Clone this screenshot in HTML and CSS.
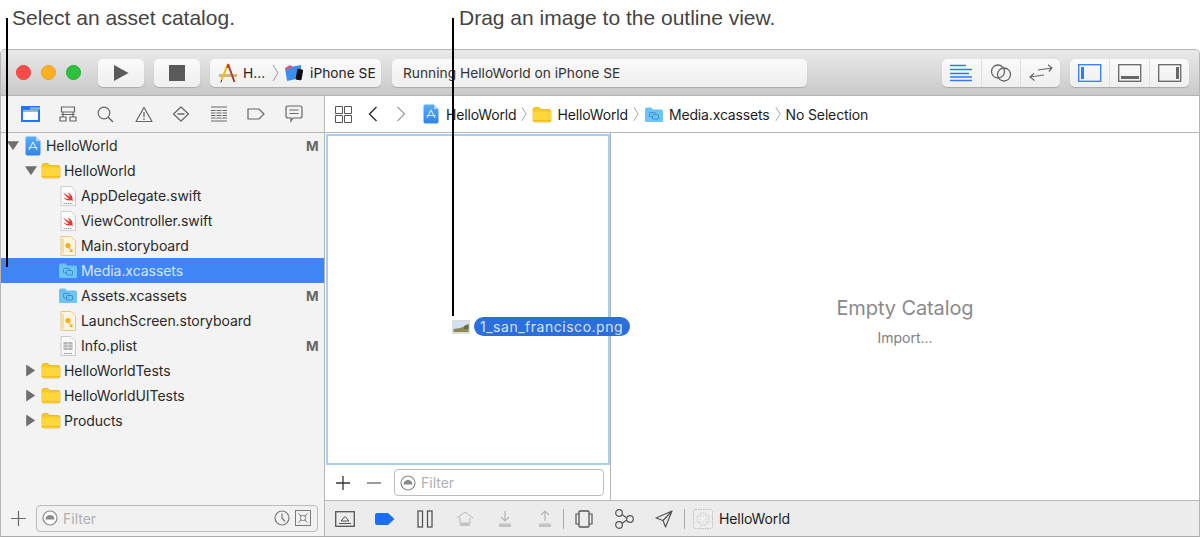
FILE: index.html
```html
<!DOCTYPE html>
<html lang="en">
<head>
<meta charset="utf-8">
<title>Xcode asset catalog</title>
<link rel="stylesheet" href="styles.css">
</head>
<body>
<svg class="defs" width="0" height="0" aria-hidden="true">
  <defs>
    <linearGradient id="projgrad" x1="0" y1="0" x2="0" y2="1"><stop offset="0" stop-color="#57aef7"/><stop offset="1" stop-color="#2f84ea"/></linearGradient>
    <symbol id="folder" viewBox="0 0 20 17"><path d="M1 3.500Q1 1.500 3 1.500H7L9 3.500H17Q19 3.500 19 5.500V14.500Q19 16 17.500 16H2.500Q1 16 1 14.500Z" fill="#f9c926" stroke="#e0a91b" stroke-width=".7"/><path d="M1 5.500H19V14.500Q19 16 17.500 16H2.500Q1 16 1 14.500Z" fill="#fed73d"/><path d="M1 14.800H19" stroke="#eeb11c" stroke-width="1"/></symbol>
    <symbol id="bluefolder" viewBox="0 0 20 17"><path d="M1 3.500Q1 1.500 3 1.500H7L9 3.500H17Q19 3.500 19 5.500V14.500Q19 16 17.500 16H2.500Q1 16 1 14.500Z" fill="#6cc0f2"/><path d="M1 5.500H19V14.500Q19 16 17.500 16H2.500Q1 16 1 14.500Z" fill="#6dc4f7"/><rect x="5.500" y="6.500" width="6" height="4.500" rx=".8" fill="none" stroke="#3d8fcb"/><rect x="8.500" y="8.500" width="6" height="4.500" rx=".8" fill="#6dc4f7" stroke="#3d8fcb"/></symbol>
    <symbol id="project" viewBox="0 0 16 20"><path d="M2 .5H11L15.500 5V17.500Q15.500 19.500 13.500 19.500H2.500Q.5 19.500 .5 17.500V2Q.5.5 2 .5Z" fill="url(#projgrad)"/><path d="M11 .5L15.500 5H11Z" fill="#b6d9f9"/><path d="M8 6L4 14M8 6L12 14M3.500 11.500H12.500" stroke="#d5e9fc" stroke-width="1.100" fill="none"/></symbol>
    <symbol id="swift" viewBox="0 0 16 20"><path d="M1 .5H11L15.500 5V19.500H1Z" fill="#fbfbfb" stroke="#cfcfcf"/><path d="M3 6.500C6 9 8 10 10 11L5 7.500L10 10.500C9 8.500 8 7 8 6.500C10.500 8 13 10.500 12.500 13.500C13 14.500 13 15 12.800 15C12 14 11 14 10 14.500C7.500 15 5 13.500 3.500 11.500C6 13 8 13 9 12.500C7 11.500 4.500 9 3 6.500Z" fill="#e8352c"/><path d="M3.500 17.500H12.500" stroke="#999" stroke-width="1.100" stroke-dasharray="1.500 .7"/></symbol>
    <symbol id="story" viewBox="0 0 16 20"><path d="M1 .5H11L15.500 5V19.500H1Z" fill="#fdf6df" stroke="#e0c888"/><path d="M3 3V18" stroke="#f2d58f" stroke-width="1.500"/><circle cx="8" cy="9.500" r="2.600" fill="#f1b21e"/><path d="M9 12L12 15.500M12 13V15.500H9.500" stroke="#e2a41a" fill="none"/></symbol>
    <symbol id="plist" viewBox="0 0 16 20"><path d="M1 .5H11L15.500 5V19.500H1Z" fill="#f8f8f8" stroke="#c9c9c9"/><path d="M3.500 6H12.500V14H3.500Z" fill="#b4b4b4"/><path d="M8 6V14M3.500 8.700H12.500M3.500 11.300H12.500" stroke="#eee" stroke-width=".7"/><path d="M4 17.500H12" stroke="#999" stroke-width="1.100" stroke-dasharray="1.500 .7"/></symbol>
    <symbol id="filtericon" viewBox="0 0 16 16"><circle cx="8" cy="8" r="7" fill="#fff" stroke="#8a8a8a" stroke-width="1.200"/><path d="M3.500 9.500A4.500 4.500 0 0 1 12.500 9.500Z" fill="#8a8a8a"/></symbol>
  </defs>
</svg>

<div class="page">
  <header class="captions">
    <p class="caption caption-left">Select an asset catalog.</p>
    <p class="caption caption-right">Drag an image to the outline view.</p>
  </header>

  <main class="window">
    <section class="toolbar">
      <div class="lights"><i class="light red"></i><i class="light amber"></i><i class="light green"></i></div>
      <button class="tbtn"><svg width="16" height="18" viewBox="0 0 16 18"><path d="M1 1L15.500 9L1 17Z" fill="#5a5a5a"/></svg></button>
      <button class="tbtn"><svg width="16" height="16" viewBox="0 0 16 16"><rect width="16" height="16" fill="#5a5a5a"/></svg></button>
      <div class="scheme">
        <svg width="20" height="20" viewBox="0 0 20 20"><path d="M1 11H19V14H1Z" fill="#d8b380"/><path d="M10 1L3.500 17" stroke="#e9c21f" stroke-width="2"/><path d="M10 1L16.500 19" stroke="#a5452f" stroke-width="2"/><path d="M9 2H11.500V5H8.500Z" fill="#c0392b"/><path d="M3.500 17L3 19.500" stroke="#333"/></svg>
        <span class="scheme-name">H...</span>
        <svg class="crumb-arrow" width="7" height="18" viewBox="0 0 7 18"><path d="M1 1L6 9L1 17" fill="none" stroke="#9a9a9a"/></svg>
        <svg width="20" height="18" viewBox="0 0 20 18"><path d="M1 4L17 1V14L3 17Z" fill="#3a8fee"/><path d="M1 4L6 1L9 3L3 6Z" fill="#e0518a"/><rect x="12.500" y="5" width="6" height="11" rx="1.200" fill="#111" transform="rotate(10 15 10)"/></svg>
        <span class="scheme-device">iPhone SE</span>
      </div>
      <div class="status">Running HelloWorld on iPhone SE</div>
      <div class="segments seg-editor">
        <button class="seg"><svg width="24" height="18" viewBox="0 0 24 18"><path d="M1 1.500H17M1 5.500H23M1 9.500H20M1 13H23M1 16.500H23" stroke="#2f7bf5" stroke-width="1.300"/></svg></button>
        <button class="seg"><svg width="22" height="18" viewBox="0 0 22 18"><circle cx="8" cy="7.500" r="6.500" fill="none" stroke="#666" stroke-width="1.300"/><circle cx="14" cy="10.500" r="6.500" fill="none" stroke="#666" stroke-width="1.300"/></svg></button>
        <button class="seg"><svg width="24" height="18" viewBox="0 0 24 18"><path d="M9 6L23 4M19 .8L23 4L19.800 7.500M15 11L1 13M5 9.500L1 13L5.500 16.500" fill="none" stroke="#666" stroke-width="1.200"/></svg></button>
      </div>
      <div class="segments seg-views">
        <button class="seg"><svg width="24" height="18" viewBox="0 0 24 18"><rect x=".7" y=".7" width="22" height="16.600" fill="none" stroke="#2f7bf5" stroke-width="1.300"/><rect x="3" y="3" width="3" height="12" fill="#2f7bf5"/></svg></button>
        <button class="seg"><svg width="24" height="18" viewBox="0 0 24 18"><rect x=".7" y=".7" width="22" height="16.600" fill="none" stroke="#666" stroke-width="1.300"/><rect x="3" y="12" width="18" height="3" fill="#666"/></svg></button>
        <button class="seg"><svg width="24" height="18" viewBox="0 0 24 18"><rect x=".7" y=".7" width="22" height="16.600" fill="none" stroke="#666" stroke-width="1.300"/><rect x="18" y="3" width="3" height="12" fill="#666"/></svg></button>
      </div>
    </section>

    <section class="workspace">
      <aside class="sidebar">
        <nav class="tabs">
          <span class="tab"><svg width="19" height="16" viewBox="0 0 19 16"><path d="M1 1H18V15H1Z" fill="#fff" stroke="#1f77f7" stroke-width="2"/><path d="M0 0H19V4H0Z" fill="#1f77f7"/><path d="M9 1.500H19V3.500H9Z" fill="#8fbcfb"/><path d="M1.500 5H17.500" stroke="#1f77f7" stroke-width="1"/></svg></span>
          <span class="tab"><svg width="18" height="16" viewBox="0 0 18 16"><path d="M2.500 1H15.500V6H2.500ZM1 11H7V15H1ZM11 11H17V15H11ZM4 6V11M14 6V11M2.500 8.500H15.500" fill="none" stroke="#666" stroke-width="1.200"/></svg></span>
          <span class="tab"><svg width="17" height="17" viewBox="0 0 17 17"><circle cx="7" cy="7" r="5.800" fill="none" stroke="#666" stroke-width="1.200"/><path d="M11 11L16 16" stroke="#666" stroke-width="1.500"/></svg></span>
          <span class="tab"><svg width="18" height="17" viewBox="0 0 18 17"><path d="M9 1.500L17 15.500H1Z" fill="none" stroke="#666" stroke-width="1.200" stroke-linejoin="round"/><path d="M9 6V11M9 12.300V14" stroke="#666" stroke-width="1.300"/></svg></span>
          <span class="tab"><svg width="18" height="16" viewBox="0 0 18 16"><path d="M9 1L16.500 8L9 15L1.500 8Z" fill="none" stroke="#666" stroke-width="1.200" stroke-linejoin="round"/><path d="M5.500 8H12.500" stroke="#666" stroke-width="1.300"/></svg></span>
          <span class="tab"><svg width="18" height="16" viewBox="0 0 18 16"><path d="M1 1H17M1 4.500H17M1 7H17M1 9.500H17M1 12H17M1 15H17" stroke="#666"/><path d="M6 4V12.500M12 4V12.500" stroke="#f3f3f3"/></svg></span>
          <span class="tab"><svg width="18" height="12" viewBox="0 0 18 12"><path d="M1 1H12L17 6L12 11H1Z" fill="none" stroke="#666" stroke-width="1.200"/></svg></span>
          <span class="tab"><svg width="18" height="18" viewBox="0 0 18 18"><path d="M3 1H15Q17 1 17 3V11Q17 13 15 13H8L6 16V13H3Q1 13 1 11V3Q1 1 3 1Z" fill="none" stroke="#666" stroke-width="1.200"/><path d="M4.500 5H13.500M4.500 8.500H13.500" stroke="#666"/></svg></span>
        </nav>
        <ul class="tree">
          <li class="row l0"><i class="tri open"></i><span class="slot"><svg width="16" height="20"><use href="#project"/></svg></span><span class="name">HelloWorld</span><b class="flag">M</b></li>
          <li class="row l1"><i class="tri open"></i><span class="slot"><svg width="20" height="17"><use href="#folder"/></svg></span><span class="name">HelloWorld</span></li>
          <li class="row l2"><i class="tri none"></i><span class="slot"><svg width="16" height="20"><use href="#swift"/></svg></span><span class="name">AppDelegate.swift</span></li>
          <li class="row l2"><i class="tri none"></i><span class="slot"><svg width="16" height="20"><use href="#swift"/></svg></span><span class="name">ViewController.swift</span></li>
          <li class="row l2"><i class="tri none"></i><span class="slot"><svg width="16" height="20"><use href="#story"/></svg></span><span class="name">Main.storyboard</span></li>
          <li class="row l2 selected"><i class="tri none"></i><span class="slot"><svg width="20" height="17"><use href="#bluefolder"/></svg></span><span class="name">Media.xcassets</span></li>
          <li class="row l2"><i class="tri none"></i><span class="slot"><svg width="20" height="17"><use href="#bluefolder"/></svg></span><span class="name">Assets.xcassets</span><b class="flag">M</b></li>
          <li class="row l2"><i class="tri none"></i><span class="slot"><svg width="16" height="20"><use href="#story"/></svg></span><span class="name">LaunchScreen.storyboard</span></li>
          <li class="row l2"><i class="tri none"></i><span class="slot"><svg width="16" height="20"><use href="#plist"/></svg></span><span class="name">Info.plist</span><b class="flag">M</b></li>
          <li class="row l1"><i class="tri closed"></i><span class="slot"><svg width="20" height="17"><use href="#folder"/></svg></span><span class="name">HelloWorldTests</span></li>
          <li class="row l1"><i class="tri closed"></i><span class="slot"><svg width="20" height="17"><use href="#folder"/></svg></span><span class="name">HelloWorldUITests</span></li>
          <li class="row l1"><i class="tri closed"></i><span class="slot"><svg width="20" height="17"><use href="#folder"/></svg></span><span class="name">Products</span></li>
        </ul>
        <div class="side-foot">
          <svg width="15" height="15" viewBox="0 0 15 15"><path d="M7.500 0V15M0 7.500H15" stroke="#6a6a6a" stroke-width="1.200"/></svg>
          <div class="filter side-filter">
            <svg width="16" height="16"><use href="#filtericon"/></svg>
            <span class="filter-text">Filter</span>
            <svg class="clock" width="16" height="16" viewBox="0 0 16 16"><circle cx="8" cy="8" r="7" fill="none" stroke="#7a7a7a" stroke-width="1.200"/><path d="M8 3.500V8L11 11.500" fill="none" stroke="#7a7a7a" stroke-width="1.200"/></svg>
            <svg width="16" height="16" viewBox="0 0 16 16"><rect x=".5" y=".5" width="15" height="15" fill="none" stroke="#7a7a7a"/><path d="M3.500 3.500L6 6M12.500 3.500L10 6M3.500 12.500L6 10M12.500 12.500L10 10" stroke="#7a7a7a"/><rect x="5.500" y="5.500" width="5" height="5" rx="2" fill="none" stroke="#7a7a7a"/></svg>
          </div>
        </div>
      </aside>

      <div class="main">
        <nav class="jumpbar">
          <svg class="j-grid" width="17" height="17" viewBox="0 0 17 17"><path d="M.5.5H7.500V7.500H.5ZM9.500.5H16.500V7.500H9.500ZM.5 9.500H7.500V16.500H.5ZM9.500 9.500H16.500V16.500H9.500Z" fill="none" stroke="#555"/></svg>
          <svg class="j-back" width="10" height="16" viewBox="0 0 10 16"><path d="M8.500 1L1.500 8L8.500 15" fill="none" stroke="#333" stroke-width="1.500"/></svg>
          <svg class="j-fwd" width="10" height="16" viewBox="0 0 10 16"><path d="M1.500 1L8.500 8L1.500 15" fill="none" stroke="#aaa" stroke-width="1.500"/></svg>
          <svg class="j-icon" width="16" height="20"><use href="#project"/></svg>
          <span class="crumb crumb-first">HelloWorld</span>
          <svg class="crumb-arrow" width="6" height="18" viewBox="0 0 7 18"><path d="M1 1L6 9L1 17" fill="none" stroke="#999"/></svg>
          <svg width="20" height="17"><use href="#folder"/></svg>
          <span class="crumb">HelloWorld</span>
          <svg class="crumb-arrow" width="6" height="18" viewBox="0 0 7 18"><path d="M1 1L6 9L1 17" fill="none" stroke="#999"/></svg>
          <svg width="20" height="17"><use href="#bluefolder"/></svg>
          <span class="crumb">Media.xcassets</span>
          <svg class="crumb-arrow" width="6" height="18" viewBox="0 0 7 18"><path d="M1 1L6 9L1 17" fill="none" stroke="#999"/></svg>
          <span class="crumb">No Selection</span>
        </nav>
        <div class="content">
          <div class="outline-col">
            <div class="outline"></div>
            <div class="outline-foot">
              <svg width="16" height="16" viewBox="0 0 16 16"><path d="M8 1V15M1 8H15" stroke="#333" stroke-width="1.300"/></svg>
              <svg width="16" height="16" viewBox="0 0 16 16"><path d="M1 8H15" stroke="#666" stroke-width="1.300"/></svg>
              <div class="filter outline-filter">
                <svg width="16" height="16"><use href="#filtericon"/></svg>
                <span class="filter-text">Filter</span>
              </div>
            </div>
          </div>
          <div class="detail">
            <p class="empty-title">Empty Catalog</p>
            <p class="empty-action">Import...</p>
          </div>
        </div>
        <div class="debugbar">
          <span class="dbg"><svg width="20" height="16" viewBox="0 0 20 16"><rect x=".7" y=".7" width="18.600" height="14.600" fill="none" stroke="#555" stroke-width="1.300"/><path d="M6 10L10 5.500L14 10ZM4 12.500H16" fill="none" stroke="#555"/></svg></span>
          <span class="dbg"><svg width="20" height="12" viewBox="0 0 20 12"><path d="M2 0H13L19.500 6L13 12H2Q0 12 0 10V2Q0 0 2 0Z" fill="#1a6ff5"/></svg></span>
          <span class="dbg"><svg width="16" height="18" viewBox="0 0 16 18"><rect x="1" y="1" width="4.500" height="16" fill="none" stroke="#555" stroke-width="1.300"/><rect x="10.500" y="1" width="4.500" height="16" fill="none" stroke="#555" stroke-width="1.300"/></svg></span>
          <span class="dbg"><svg width="18" height="17" viewBox="0 0 18 17"><path d="M1 8L9 2L17 8M4 13V7M14 8V13" fill="none" stroke="#b5b5b5"/><rect x="4" y="12.500" width="10" height="3.500" fill="#c3c3c3"/></svg></span>
          <span class="dbg"><svg width="14" height="18" viewBox="0 0 14 18"><path d="M7 1V10M3 7L7 11L11 7" fill="none" stroke="#b5b5b5" stroke-width="1.200"/><rect x="1" y="13.500" width="12" height="3.500" fill="#c3c3c3"/></svg></span>
          <span class="dbg"><svg width="14" height="18" viewBox="0 0 14 18"><path d="M7 11V2M3 5L7 1L11 5" fill="none" stroke="#b5b5b5" stroke-width="1.200"/><rect x="1" y="13.500" width="12" height="3.500" fill="#c3c3c3"/></svg></span>
          <i class="dbg-sep dbg-sep-first"></i>
          <span class="dbg"><svg width="18" height="18" viewBox="0 0 18 18"><rect x="4" y="1" width="10" height="16" rx="1" fill="none" stroke="#555" stroke-width="1.300"/><path d="M4 4H1V14H4M14 4H17V14H14" fill="none" stroke="#555" stroke-width="1.200"/></svg></span>
          <span class="dbg"><svg width="20" height="20" viewBox="0 0 20 20"><circle cx="5" cy="4" r="3.300" fill="none" stroke="#555" stroke-width="1.200"/><circle cx="5" cy="16" r="3.300" fill="none" stroke="#555" stroke-width="1.200"/><circle cx="16" cy="10" r="3.300" fill="none" stroke="#555" stroke-width="1.200"/><path d="M8 5.500L12.800 9M8 14.500L12.800 11" stroke="#555" stroke-width="1.200"/></svg></span>
          <span class="dbg"><svg width="18" height="18" viewBox="0 0 18 18"><path d="M17 1L1 8L8 10.500L10.500 17ZM17 1L8 10.500" fill="none" stroke="#555" stroke-width="1.200" stroke-linejoin="round"/></svg></span>
          <i class="dbg-sep"></i>
          <svg class="dbg-app" width="20" height="20" viewBox="0 0 20 20"><rect x=".5" y=".5" width="19" height="19" rx="2" fill="#efefef" stroke="#bbb" stroke-dasharray="1.500 1"/><circle cx="10" cy="10" r="6" fill="none" stroke="#c4c4c4" stroke-dasharray="1.500 1"/><path d="M0 7H20M0 13H20M7 0V20M13 0V20" stroke="#d0d0d0" stroke-dasharray="1 1.500"/></svg>
          <span class="dbg-name">HelloWorld</span>
        </div>
      </div>
    </section>
  </main>

  <i class="leader leader-left"></i>
  <i class="leader leader-right"></i>
  <div class="dragged">
    <svg width="18" height="14" viewBox="0 0 18 14"><rect width="18" height="14" fill="#dcdcdc"/><rect x="1.500" y="1.500" width="15" height="10.500" fill="#cfe2f2"/><path d="M1.500 9L8 8L16.500 5V12H1.500Z" fill="#8b8a55"/><path d="M12 6L16.500 4V9H12Z" fill="#6b6a3b"/></svg>
    <span class="drag-pill">1_san_francisco.png</span>
  </div>
</div>
</body>
</html>
```

FILE: styles.css
```css
* { box-sizing: border-box; }
html, body { margin: 0; padding: 0; background: #fff; }
body { font-family: Inter, "Liberation Sans", sans-serif; color: #222; overflow: hidden; }
.defs { position: absolute; }
svg { display: block; flex: none; }
button { border: 0; padding: 0; margin: 0; font: inherit; }
ul, p { margin: 0; padding: 0; list-style: none; }

.page { position: relative; width: 1200px; height: 537px; overflow: hidden; }

.captions { height: 49px; display: flex; padding-top: 6px; font-family: "Liberation Sans", sans-serif; font-size: 21px; line-height: 24px; color: #444; }
.caption-left { width: 459px; padding-left: 12px; }

.window { height: 488px; border: 1px solid #b5b5b5; border-bottom-color: #aaa; border-radius: 5px 5px 0 0; display: flex; flex-direction: column; overflow: hidden; }

.toolbar { height: 46px; flex: none; display: flex; align-items: center; background: linear-gradient(#e9e9e9, #c9c9c9); border-bottom: 1px solid #b4b4b4; padding-left: 15px; font-size: 14px; }
.lights { display: flex; gap: 10px; margin-right: 17px; }
.light { width: 15px; height: 15px; border-radius: 50%; display: block; }
.red { background: #fc4a47; border: 1px solid #e5413e; }
.amber { background: #fdb021; border: 1px solid #e8a01e; }
.green { background: #2ac33b; border: 1px solid #23ae33; }
.tbtn, .scheme, .status, .segments { height: 28px; background: linear-gradient(#fafafa, #efefef); border-radius: 5px; box-shadow: 0 1px 1px #a9a9a9; }
.tbtn { width: 46px; display: flex; align-items: center; justify-content: center; margin-right: 10px; }
.scheme { width: 171px; display: flex; align-items: center; padding-left: 8px; font-size: 13.750px; color: #222; margin-right: 11px; }
.scheme-name { margin-left: 5px; margin-right: 7px; }
.scheme .crumb-arrow { margin-right: 5px; }
.scheme-device { margin-left: 6px; }
.status { width: 415px; padding-left: 11px; line-height: 28px; font-size: 13.750px; color: #333; margin-right: 135px; }
.segments { display: flex; }
.seg-editor { width: 118px; margin-right: 10px; }
.seg-views { width: 119px; }
.seg { flex: 1; display: flex; align-items: center; justify-content: center; background: none; border-right: 1px solid #dedede; }
.seg:last-child { border-right: 0; }

.workspace { flex: 1; display: flex; min-height: 0; }

.sidebar { width: 324px; flex: none; background: #f3f3f3; border-right: 1px solid #b5b5b5; display: flex; flex-direction: column; }
.tabs { height: 37px; flex: none; display: flex; padding-left: 11px; border-bottom: 1px solid #b5b5b5; }
.tab { width: 37.600px; display: flex; align-items: center; justify-content: center; }
.tree { flex: 1; }
.row { height: 25px; display: flex; align-items: center; font-size: 14px; letter-spacing: -.05px; color: #2a2a2a; }
.l0 { padding-left: 6px; }
.l1 { padding-left: 24px; }
.l2 { padding-left: 41px; }
.tri { width: 12px; display: block; flex: none; height: 12px; }
.tri.open { background: #6f6f6f; clip-path: polygon(0 15%, 100% 15%, 50% 90%); }
.tri.closed { background: #6f6f6f; clip-path: polygon(10% 0, 85% 50%, 10% 100%); }
.slot { width: 27px; flex: none; display: flex; justify-content: center; }
.name { flex: 1; }
.flag { width: 18px; font-size: 13.500px; color: #666; font-weight: 700; }
.selected { background: #3f85f6; color: #d4e5fd; }

.side-foot { height: 36px; flex: none; display: flex; align-items: center; padding: 0 6px 0 10px; gap: 10px; }
.filter { display: flex; align-items: center; height: 27px; border: 1px solid #bcbcbc; border-radius: 4px; background: #f7f7f7; padding-left: 5px; font-size: 14px; gap: 5px; }
.side-filter { flex: 1; padding-right: 6px; background: #f1f1f1; }
.filter-text { color: #b0b0b0; }
.clock { margin-left: auto; }

.main { flex: 1; min-width: 0; display: flex; flex-direction: column; background: #fff; }
.jumpbar { height: 37px; flex: none; display: flex; align-items: center; border-bottom: 1px solid #b5b5b5; font-size: 14px; letter-spacing: -.15px; color: #1d1d1d; padding-left: 10px; gap: 5px; }
.j-back { margin-left: 11px; }
.j-fwd { margin-left: 13px; }
.j-icon { margin-left: 12px; }
.crumb { white-space: nowrap; }
.crumb-first { margin-left: 2px; }

.content { flex: 1; min-height: 0; display: flex; }
.outline-col { width: 286px; flex: none; border-right: 1px solid #b5b5b5; display: flex; flex-direction: column; }
.outline { flex: 1; border: 2px solid #a8cdf6; margin-top: 1px; margin-left: 1px; }
.outline-foot { height: 35px; flex: none; display: flex; align-items: center; padding-left: 10px; gap: 15px; }
.outline-filter { width: 210px; margin-left: -3px; background: #fff; }
.detail { flex: 1; display: flex; flex-direction: column; align-items: center; justify-content: center; padding-top: 8px; }
.empty-title { font-size: 20px; line-height: 26px; color: #8a8a8a; letter-spacing: -.1px; }
.empty-action { font-size: 14px; line-height: 18px; margin-top: 8px; color: #808080; }

.debugbar { height: 36px; flex: none; display: flex; align-items: center; background: #ececec; border-top: 1px solid #b8b8b8; font-size: 14px; letter-spacing: -.1px; color: #1d1d1d; }
.dbg { width: 40px; height: 100%; display: flex; align-items: center; justify-content: center; flex: none; }
.dbg-sep { width: 1px; height: 20px; background: #a9a9a9; display: block; flex: none; }
.dbg-sep-first { margin-left: -2px; }
.dbg-app { margin-left: 8px; }
.dbg-name { margin-left: 6px; }

.leader { position: absolute; width: 2px; background: #000; display: block; }
.leader-left { left: 6px; top: 18px; height: 249px; }
.leader-right { left: 452px; top: 18px; height: 298px; }
.dragged { position: absolute; left: 452px; top: 317px; display: flex; align-items: center; gap: 4px; }
.drag-pill { height: 19px; line-height: 19px; width: 156px; padding-left: 6px; border-radius: 10px; background: #2a6fdc; color: #d6e4fa; font-size: 14px; letter-spacing: .52px; white-space: nowrap; }
```
